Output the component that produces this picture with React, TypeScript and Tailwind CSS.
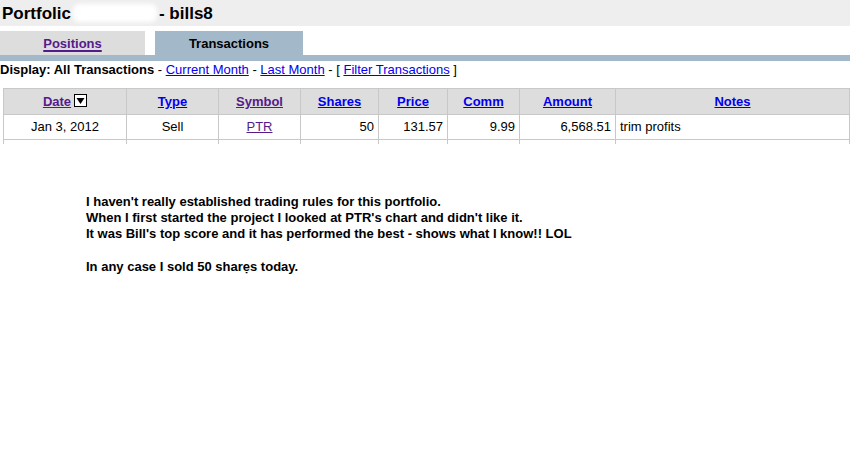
import React from "react";

const visited = "text-[#551a8b] underline";
const link = "text-[#0000ee] underline";

type Col = { label: string; w: string; cls: string };

const cols: Col[] = [
  { label: "Date", w: "w-[123px]", cls: visited },
  { label: "Type", w: "w-[92px]", cls: link },
  { label: "Symbol", w: "w-[82px]", cls: visited },
  { label: "Shares", w: "w-[78px]", cls: link },
  { label: "Price", w: "w-[69px]", cls: link },
  { label: "Comm", w: "w-[72px]", cls: link },
  { label: "Amount", w: "w-[96px]", cls: link },
  { label: "Notes", w: "w-[234px]", cls: link },
];

function SortIcon() {
  return (
    <span className="inline-block align-[-1px] w-[13px] h-[13px] border border-black bg-white ml-[3px] relative">
      <svg width="11" height="11" viewBox="0 0 11 11" className="absolute left-0 top-0">
        <polygon points="1.5,3 9.5,3 5.5,9" fill="#000" />
      </svg>
    </span>
  );
}

export default function App() {
  const cell = "border border-[#c8c8c8] px-[4px]";
  return (
    <div className="w-[850px] h-[460px] bg-white text-black text-[13px] font-['Liberation_Sans',Arial,sans-serif] overflow-hidden">
      {/* page title */}
      <div className="h-[26px] bg-[#eeeeee] flex items-center pl-[2px] text-[17px] font-bold leading-none">
        <span>Portfolic</span>
        <span className="inline-block w-[84px] h-[18px] bg-white rounded-[6px] blur-[2px] mx-[2px]" />
        <span>- bills8</span>
      </div>

      {/* tabs */}
      <div className="h-[5px]" />
      <div className="flex h-[24px] font-bold">
        <div className="w-[145px] bg-[#dddddd] flex items-center justify-center pt-[1px]">
          <span className="text-[#551a8b] underline decoration-2 underline-offset-2">Positions</span>
        </div>
        <div className="w-[148px] ml-[10px] bg-[#a3b8c9] flex items-center justify-center pt-[1px]">
          <span>Transactions</span>
        </div>
      </div>
      <div className="h-[6px] bg-[#a3b8c9]" />

      {/* filter line */}
      <div className="h-[16px] flex items-center whitespace-pre leading-none">
        <span className="font-bold">Display: All Transactions</span>
        <span> - </span>
        <span className={link}>Current Month</span>
        <span> - </span>
        <span className={link}>Last Month</span>
        <span> - [ </span>
        <span className={link}>Filter Transactions</span>
        <span> ]</span>
      </div>

      {/* transactions table */}
      <table className="ml-[3px] mt-[11px] w-[846px] table-fixed border-collapse">
        <colgroup>
          {cols.map((c) => (
            <col key={c.label} className={c.w} />
          ))}
        </colgroup>
        <thead>
          <tr className="h-[26px] bg-[#dddddd]">
            {cols.map((c) => (
              <th key={c.label} className={`${cell} font-bold text-center`}>
                <span className={c.cls}>{c.label}</span>
                {c.label === "Date" && <SortIcon />}
              </th>
            ))}
          </tr>
        </thead>
        <tbody>
          <tr className="h-[25px]">
            <td className={`${cell} text-center`}>Jan 3, 2012</td>
            <td className={`${cell} text-center`}>Sell</td>
            <td className={`${cell} text-center`}>
              <span className={visited}>PTR</span>
            </td>
            <td className={`${cell} text-right`}>50</td>
            <td className={`${cell} text-right`}>131.57</td>
            <td className={`${cell} text-right`}>9.99</td>
            <td className={`${cell} text-right`}>6,568.51</td>
            <td className={`${cell} text-left`}>trim profits</td>
          </tr>
          <tr className="h-[4px]">
            {cols.map((c) => (
              <td key={c.label} className="border-x border-[#c8c8c8] p-0" />
            ))}
          </tr>
        </tbody>
      </table>

      {/* journal note */}
      <div className="ml-[86px] mt-[50px] font-bold leading-[16px]">
        <div>I haven't really established trading rules for this portfolio.</div>
        <div>When I first started the project I looked at PTR's chart and didn't like it.</div>
        <div>It was Bill's top score and it has performed the best - shows what I know!! LOL</div>
        <div className="h-[17px]" />
        <div>In any case I sold 50 sharẹs today.</div>
      </div>
    </div>
  );
}
